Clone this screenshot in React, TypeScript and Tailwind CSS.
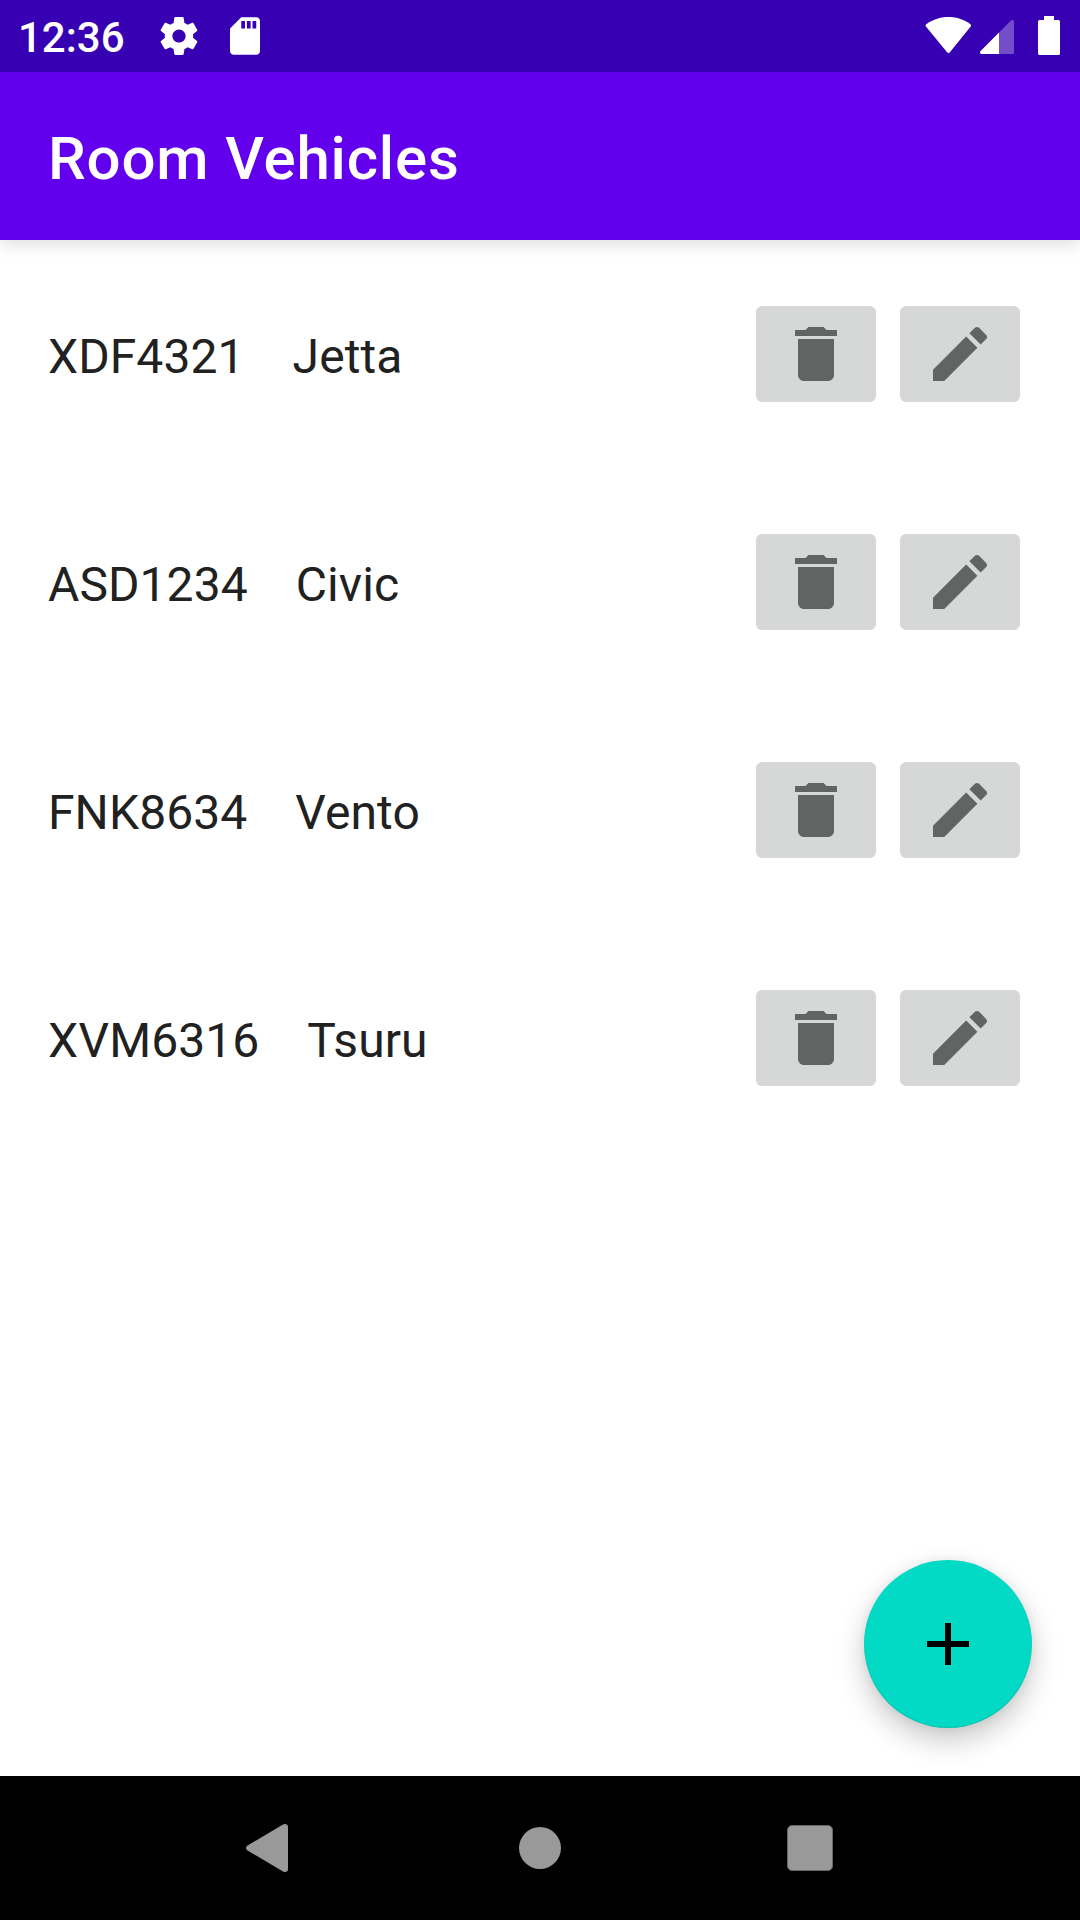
const vehicles = [
  { plate: 'XDF4321', name: 'Jetta' },
  { plate: 'ASD1234', name: 'Civic' },
  { plate: 'FNK8634', name: 'Vento' },
  { plate: 'XVM6316', name: 'Tsuru' },
];

function GearIcon() {
  return (
    <svg viewBox="1.94 2 20.12 20" className="h-[38px] w-[38px] fill-white" aria-hidden="true">
      <path d="M19.43 12.98c.04-.32.07-.64.07-.98s-.03-.66-.07-.98l2.11-1.65c.19-.15.24-.42.12-.64l-2-3.46c-.12-.22-.39-.3-.61-.22l-2.49 1c-.52-.4-1.08-.73-1.69-.98l-.38-2.65C14.46 2.18 14.25 2 14 2h-4c-.25 0-.46.18-.49.42l-.38 2.65c-.61.25-1.17.59-1.69.98l-2.49-1c-.23-.09-.49 0-.61.22l-2 3.46c-.13.22-.07.49.12.64l2.11 1.65c-.04.32-.07.65-.07.98s.03.66.07.98l-2.11 1.65c-.19.15-.24.42-.12.64l2 3.46c.12.22.39.3.61.22l2.49-1c.52.4 1.08.73 1.69.98l.38 2.65c.03.24.24.42.49.42h4c.25 0 .46-.18.49-.42l.38-2.65c.61-.25 1.17-.59 1.69-.98l2.49 1c.23.09.49 0 .61-.22l2-3.46c.12-.22.07-.49-.12-.64l-2.11-1.65zM12 15.5c-1.93 0-3.5-1.57-3.5-3.5s1.57-3.5 3.5-3.5 3.5 1.57 3.5 3.5-1.57 3.5-3.5 3.5z" />
    </svg>
  );
}

function SdCardIcon() {
  return (
    <svg viewBox="4 2 16 20" className="h-[38px] w-[30px] fill-white" aria-hidden="true">
      <path d="M18 2h-8L4.02 8 4 20c0 1.1.9 2 2 2h12c1.1 0 2-.9 2-2V4c0-1.1-.9-2-2-2zm-6 6h-2V4h2v4zm3 0h-2V4h2v4zm3 0h-2V4h2v4z" />
    </svg>
  );
}

function WifiIcon() {
  return (
    <svg viewBox="-0.5 0 46 36" className="h-9 w-[46px] fill-white" aria-hidden="true">
      <path d="M23 0C14.500 0 7 2.700 .8 7.200C-.1 7.900 -.2 8.700 .4 9.500L21.600 35.200Q23 36.700 24.400 35.200L45.200 9.500C45.700 8.700 45.600 7.900 44.900 7.200C39 2.700 31.500 0 23 0Z" />
    </svg>
  );
}

function SignalIcon() {
  return (
    <svg viewBox="0 0 34 34" className="h-[34px] w-[34px] fill-white" aria-hidden="true">
      <path opacity=".3" d="M19 12.500L30.700 .8C32 -.5 34 0 34 2V32.500Q34 34 32.500 34H19Z" />
      <path d="M19 12.500V34H1.500C0 34 -.5 32 .6 30.900Z" />
    </svg>
  );
}

function BatteryIcon() {
  return (
    <svg viewBox="0 0 22 39" className="h-[39px] w-[22px] fill-white" aria-hidden="true">
      <path d="M6 0H16V4H20.500Q22 4 22 5.500V37.500Q22 39 20.500 39H1.500Q0 39 0 37.500V5.500Q0 4 1.500 4H6Z" />
    </svg>
  );
}

function DeleteIcon() {
  return (
    <svg viewBox="0 0 24 24" className="size-[72px]" aria-hidden="true">
      <path d="M6 19c0 1.1.9 2 2 2h8c1.1 0 2-.9 2-2V7H6v12zM19 4h-3.500l-1-1h-5l-1 1H5v2h14V4z" fill="#626463" />
    </svg>
  );
}

function EditIcon() {
  return (
    <svg viewBox="0 0 24 24" className="size-[72px]" aria-hidden="true">
      <path
        d="M3 17.250V21h3.750L17.810 9.940l-3.750-3.750L3 17.250zM20.710 7.040c.39-.39.39-1.020 0-1.410l-2.340-2.340c-.39-.39-1.020-.39-1.410 0l-1.830 1.830 3.750 3.750 1.830-1.830z"
        fill="#626463"
      />
    </svg>
  );
}

function StatusBar() {
  return (
    <header className="z-20 flex h-[72px] items-start bg-[#3700b3] text-white">
      <span className="ml-[18px] mt-[13px] w-[142px] text-[42px] leading-[49px] font-medium">12:36</span>
      <span className="mt-[17px]">
        <GearIcon />
      </span>
      <span className="mt-[17px] ml-8">
        <SdCardIcon />
      </span>
      <div className="ml-auto mr-5 flex items-start">
        <span className="mt-[17px]">
          <WifiIcon />
        </span>
        <span className="mt-5 ml-[9px]">
          <SignalIcon />
        </span>
        <span className="mt-4 ml-6">
          <BatteryIcon />
        </span>
      </div>
    </header>
  );
}

function VehicleRow({ plate, name }: { plate: string; name: string }) {
  return (
    <li className="flex h-[228px] items-start pr-[60px] pl-12 text-[48px] leading-[56px] tracking-[0.08px] text-[#212121]">
      <span className="mt-[23px]">{plate}</span>
      <span className="mt-[23px] ml-12">{name}</span>
      <div className="ml-auto flex gap-6">
        <button aria-label="Delete" className="flex h-24 w-[120px] items-center justify-center rounded-md bg-[#d6d8d7]">
          <DeleteIcon />
        </button>
        <button aria-label="Edit" className="flex h-24 w-[120px] items-center justify-center rounded-md bg-[#d6d8d7]">
          <EditIcon />
        </button>
      </div>
    </li>
  );
}

function NavigationBar() {
  return (
    <nav className="flex h-36 items-center bg-black pl-[246px]">
      <svg viewBox="0 0 42 48" className="h-12 w-[42px]" fill="#999999" aria-hidden="true">
        <path d="M37 .6C39.500 -.8 42 .4 42 3V45C42 47.600 39.500 48.800 37 47.400L1.500 26.500Q-1.500 24 1.500 21.500Z" />
      </svg>
      <div className="ml-[231px] size-[42px] rounded-full bg-[#999999]" />
      <div className="ml-[226px] size-[46px] rounded-[5px] border border-[#666666] bg-[#999999]" />
    </nav>
  );
}

export default function App() {
  return (
    <div className="relative flex h-[1920px] w-[1080px] flex-col overflow-hidden bg-white font-['Roboto',sans-serif]">
      <StatusBar />
      <div className="z-10 h-[168px] bg-[#6200ee] pt-[52px] pl-12 text-white shadow-[0_5px_14px_rgba(0,0,0,0.12)]">
        <h1 className="text-[60px] leading-[70px] font-medium tracking-[0.83px]">Room Vehicles</h1>
      </div>
      <main className="flex-1 pt-[66px]">
        <ul>
          {vehicles.map((v) => (
            <VehicleRow key={v.plate} plate={v.plate} name={v.name} />
          ))}
        </ul>
      </main>
      <button
        aria-label="Add vehicle"
        className="absolute right-12 bottom-48 flex size-[168px] items-center justify-center rounded-full bg-[#03dac5] shadow-[0_12px_28px_rgba(0,0,0,0.22),0_0_8px_rgba(0,0,0,0.06),inset_0_-1px_2px_rgba(0,0,0,0.12)]"
      >
        <svg viewBox="0 0 24 24" className="size-[72px]" aria-hidden="true">
          <path d="M19 13h-6v6h-2v-6H5v-2h6V5h2v6h6v2z" fill="#000000" />
        </svg>
      </button>
      <NavigationBar />
    </div>
  );
}
